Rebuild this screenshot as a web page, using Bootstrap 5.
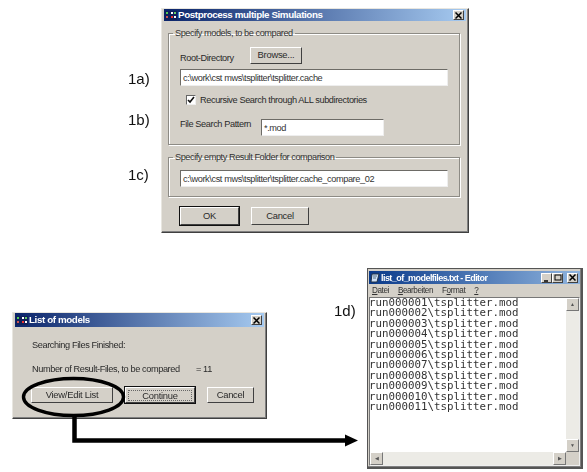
<!DOCTYPE html>
<html lang="en"><head><meta charset="utf-8"><title>Postprocess</title>
<link href="https://cdn.jsdelivr.net/npm/bootstrap@5.3.0/dist/css/bootstrap.min.css" rel="stylesheet">
<style>
html,body{margin:0;background:#fff}
.stage{position:relative;width:587px;height:472px;overflow:hidden;font-family:"Liberation Sans",Arial,sans-serif;font-size:9.2px;letter-spacing:-.4px;line-height:12px;color:#2a2a2a;filter:blur(.35px);white-space:nowrap}
.win{position:absolute;background:#d4d0c8;border:1px solid;border-color:#e8e6e0 #404040 #404040 #e8e6e0;box-shadow:inset -1px -1px 0 #808080;padding:0 2px 2px}
.win-main{left:161px;top:8px;width:308px;height:225px}
.win-list{left:12px;top:312px;width:255px;height:107px}
.win-edit{left:367px;top:268px;width:216px;height:201px;border-color:#555;border-width:1px 2px 2px 1px;padding:2px 1px 1px}
.tbar{height:12px;background:linear-gradient(90deg,#0a246a,#a6caf0);color:#fff;font-weight:700;font-size:9.8px;letter-spacing:-.4px;line-height:12px;padding:0 2px 0 1px;flex:none;gap:1px}
.tbar-list{height:14px}
.tbtn{width:11px;height:10px;background:#d4d0c8;border:1px solid;border-color:#fff #404040 #404040 #fff;flex:none}
.xbtn{background:#d4d0c8;border:1px solid;border-color:#fff #404040 #404040 #fff;font-size:9.4px;letter-spacing:-.25px;line-height:10px;height:16px;padding:0;color:#2a2a2a;border-radius:0;font-family:inherit;flex:none}
.xbtn-def{outline:1px solid #111}
.focusbox{display:block;margin:2px;line-height:9px;border:1px dotted #666}
.grp{border:1px solid #8d8b85;box-shadow:1px 1px 0 #fff,inset 1px 1px 0 #fff;padding:0 11px;min-width:0}
.grp legend{float:none;width:auto;font-size:9.2px;letter-spacing:-.45px;line-height:12px;margin:0 0 0 -7px;padding:0 2px;color:#333}
.grp-a{height:118px;margin:6px 6px 0 4px}
.grp-b{height:46px;margin:6px 6px 0 4px}
.fld{height:17px;background:#fff;border:1px solid;border-color:#6d6b66 #eee #eee #6d6b66;padding:2px;line-height:12px;color:#333;flex:none}
.fld-wide{width:268px}
.fld-short{width:123px}
.tick{width:10px;height:10px;background:#fff;border:1px solid;border-color:#666 #eee #eee #666;flex:none}
.lbl-out{position:absolute;font-size:15px;letter-spacing:0;line-height:16px;color:#111}
.lbl-a{left:128px;top:71px}.lbl-b{left:128px;top:112px}.lbl-c{left:128px;top:167px}.lbl-d{left:334px;top:303px}
.mono{font-family:"DejaVu Sans Mono","Liberation Mono",monospace;font-size:10.8px;letter-spacing:0;line-height:10.4px;color:#333;white-space:pre;margin-left:-1px}
.menubar{height:13px;font-size:8.2px;letter-spacing:-.45px;line-height:13px;gap:9px;padding-left:3px;flex:none;color:#333}
.txt-area{background:#fff;border:1px solid;border-color:#777 #eee #eee #777;flex:1;min-height:0}
.sb-v{width:13px;background:#ecebe6;flex:none}
.sb-h{height:13px;background:#ecebe6;flex:none}
.sb-btn{width:13px;height:13px;background:#d4d0c8;border:1px solid;border-color:#fff #777 #777 #fff;font-size:5px;letter-spacing:0;line-height:10px;text-align:center;color:#555;flex:none}
.sb-corner{border:0}
.arrow{position:absolute;left:0;top:0;pointer-events:none}
.row-root{margin-top:7px;gap:17px}
.w-root{width:53px;margin-top:6px}
.row-rec{margin:8px 0 0 6px;gap:4px}
.row-pat{margin-top:12px}
.w-pat{width:81px;margin-bottom:6px}
.mt-5px{margin-top:5px}
.mt-field{margin-top:7px}
.foot-main{gap:12px;margin:10px 0 0 16px}
.b-ok{width:59px;height:18px}.b-can{width:58px;height:18px}.b-brow{width:52px;height:17px}
.list-a{margin:12px 0 0 17px}
.list-b{margin:12px 0 0 17px}
.w-num{width:164px}
.list-foot{margin:12px 0 0 16px;gap:12px}
.b-ve{width:82px}.b-co{width:70px}.b-ca{width:47px}
.ed-bar{height:13px;background:linear-gradient(90deg,#0a3a8a,#8fb4de)}
.ed-title{font-size:9px;letter-spacing:-.55px}
</style></head><body>
<div class="stage">
 <section class="win win-main d-flex flex-column">
  <div class="tbar d-flex align-items-center">
   <svg width="12" height="9" viewBox="0 0 12 9"><rect width="12" height="9" fill="#10205a"/><rect x="1" y="1" width="2" height="2" fill="#5c5"/><rect x="1" y="5" width="2" height="2" fill="#c55"/><rect x="6" y="1" width="2" height="2" fill="#fff"/><rect x="9" y="1" width="2" height="2" fill="#6c6"/><rect x="6" y="5" width="2" height="2" fill="#e33"/><rect x="9" y="5" width="2" height="2" fill="#fff"/></svg>
   <span class="flex-grow-1">Postprocess multiple Simulations</span>
   <span class="tbtn d-flex align-items-center justify-content-center"><svg width="7" height="7" viewBox="0 0 7 7"><path d="M.5.5l6 6M6.5.5l-6 6" stroke="#000" stroke-width="1.5"/></svg></span>
  </div>
  <fieldset class="grp grp-a">
   <legend>Specify models, to be compared</legend>
   <div class="d-flex align-items-center row-root"><span class="w-root">Root-Directory</span><button class="xbtn b-brow">Browse...</button></div>
   <div class="fld fld-wide mt-5px">c:\work\cst mws\tsplitter\tsplitter.cache</div>
   <div class="d-flex align-items-center row-rec"><span class="tick d-flex align-items-center justify-content-center"><svg width="8" height="8" viewBox="0 0 8 8"><path d="M1 4l2 2 4-5" fill="none" stroke="#111" stroke-width="1.6"/></svg></span><span>Recursive Search through ALL subdirectories</span></div>
   <div class="d-flex align-items-center row-pat"><span class="w-pat">File Search Pattern</span><div class="fld fld-short">*.mod</div></div>
  </fieldset>
  <fieldset class="grp grp-b">
   <legend>Specify empty Result Folder for comparison</legend>
   <div class="fld fld-wide mt-field">c:\work\cst mws\tsplitter\tsplitter.cache_compare_02</div>
  </fieldset>
  <div class="d-flex foot-main"><button class="xbtn xbtn-def b-ok">OK</button><button class="xbtn b-can">Cancel</button></div>
 </section>

 <section class="win win-list d-flex flex-column">
  <div class="tbar tbar-list d-flex align-items-center">
   <svg width="12" height="9" viewBox="0 0 12 9"><rect width="12" height="9" fill="#10205a"/><rect x="1" y="1" width="2" height="2" fill="#5c5"/><rect x="1" y="5" width="2" height="2" fill="#c55"/><rect x="6" y="1" width="2" height="2" fill="#fff"/><rect x="9" y="1" width="2" height="2" fill="#6c6"/><rect x="6" y="5" width="2" height="2" fill="#e33"/><rect x="9" y="5" width="2" height="2" fill="#fff"/></svg>
   <span class="flex-grow-1">List of models</span>
   <span class="tbtn d-flex align-items-center justify-content-center"><svg width="7" height="7" viewBox="0 0 7 7"><path d="M.5.5l6 6M6.5.5l-6 6" stroke="#000" stroke-width="1.5"/></svg></span>
  </div>
  <div class="list-a">Searching Files Finished:</div>
  <div class="d-flex list-b"><span class="w-num">Number of Result-Files, to be compared</span><span>= 11</span></div>
  <div class="d-flex list-foot"><button class="xbtn b-ve">View/Edit List</button><button class="xbtn xbtn-def b-co"><span class="focusbox">Continue</span></button><button class="xbtn b-ca">Cancel</button></div>
 </section>

 <section class="win win-edit d-flex flex-column">
  <div class="tbar ed-bar d-flex align-items-center">
   <svg width="10" height="10" viewBox="0 0 10 10"><path d="M2 1h7L7 9H1z" fill="#cfe0f5" stroke="#234"/><path d="M3 3h4M3 5h3" stroke="#245" stroke-width=".7"/></svg>
   <span class="flex-grow-1 ed-title">list_of_modelfiles.txt - Editor</span>
   <span class="d-flex">
    <span class="tbtn d-flex align-items-end justify-content-center"><svg width="7" height="7" viewBox="0 0 7 7"><path d="M1 6h4" stroke="#000" stroke-width="1.5"/></svg></span>
    <span class="tbtn d-flex align-items-center justify-content-center"><svg width="8" height="7" viewBox="0 0 8 7"><rect x="1" y="1" width="6" height="5" fill="none" stroke="#000"/></svg></span>
    <span class="tbtn d-flex align-items-center justify-content-center ms-1"><svg width="7" height="7" viewBox="0 0 7 7"><path d="M.5.5l6 6M6.5.5l-6 6" stroke="#000" stroke-width="1.5"/></svg></span>
   </span>
  </div>
  <div class="menubar d-flex"><span><u>D</u>atei</span><span><u>B</u>earbeiten</span><span>F<u>o</u>rmat</span><span><u>?</u></span></div>
  <div class="txt-area d-flex flex-column">
   <div class="d-flex flex-grow-1">
    <div class="mono flex-grow-1">run000001\tsplitter.mod
run000002\tsplitter.mod
run000003\tsplitter.mod
run000004\tsplitter.mod
run000005\tsplitter.mod
run000006\tsplitter.mod
run000007\tsplitter.mod
run000008\tsplitter.mod
run000009\tsplitter.mod
run000010\tsplitter.mod
run000011\tsplitter.mod</div>
    <div class="sb-v d-flex flex-column justify-content-between"><span class="sb-btn">▲</span><span class="sb-btn">▼</span></div>
   </div>
   <div class="sb-h d-flex justify-content-between"><span class="sb-btn">◀</span><span class="d-flex"><span class="sb-btn">▶</span><span class="sb-btn sb-corner"></span></span></div>
  </div>
 </section>

 <span class="lbl-out lbl-a">1a)</span>
 <span class="lbl-out lbl-b">1b)</span>
 <span class="lbl-out lbl-c">1c)</span>
 <span class="lbl-out lbl-d">1d)</span>

 <svg class="arrow" width="587" height="472" viewBox="0 0 587 472">
  <ellipse cx="73.5" cy="397" rx="50" ry="18.5" fill="none" stroke="#000" stroke-width="3.4"/>
  <path d="M74.5 415V440.5H346" fill="none" stroke="#000" stroke-width="4.5"/>
  <path d="M345 434.5L358 440.5L345 446.5Z" fill="#000"/>
 </svg>
</div>
<script src="https://cdn.jsdelivr.net/npm/bootstrap@5.3.0/dist/js/bootstrap.bundle.min.js"></script>
</body></html>
